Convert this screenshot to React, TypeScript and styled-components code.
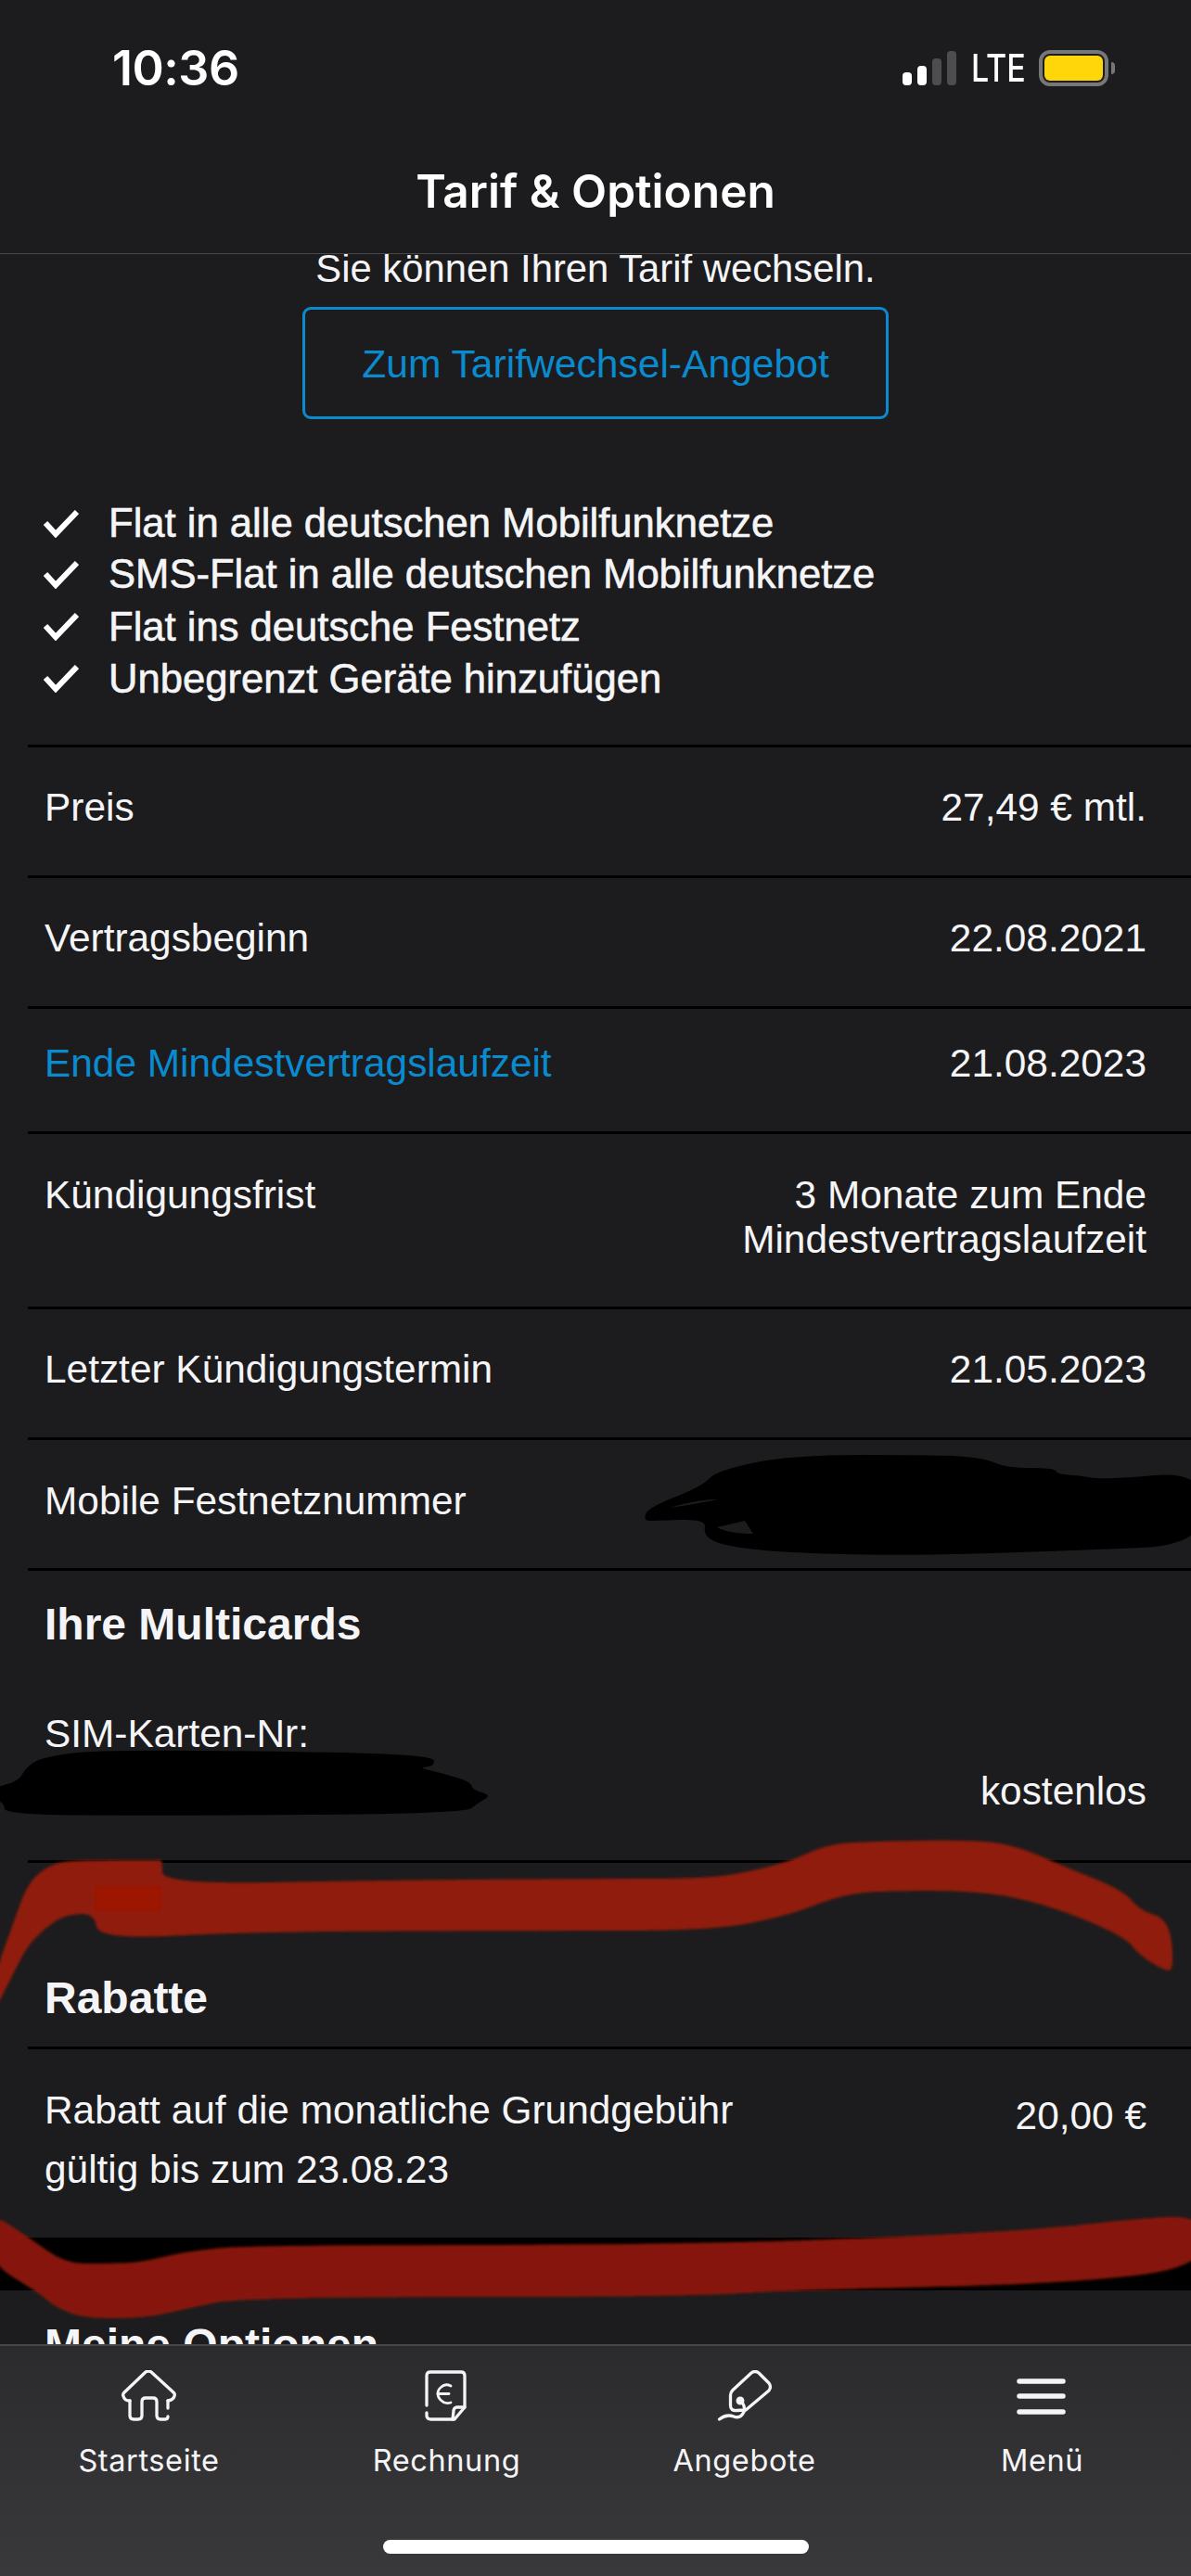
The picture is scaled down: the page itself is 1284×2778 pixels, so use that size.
/**
 * Tarif & Optionen screen
 */

import React from 'react';
import styled, { createGlobalStyle } from 'styled-components';

const GlobalStyle = createGlobalStyle`
  html, body {
    margin: 0;
    padding: 0;
    background: #1c1c1e;
  }
  * {
    box-sizing: border-box;
  }
`;

const Page = styled.div`
  position: relative;
  width: 1284px;
  height: 2778px;
  display: flex;
  flex-direction: column;
  overflow: hidden;
  background: #1c1c1e;
  color: #f5f5f7;
  font-family: 'Liberation Sans', Arial, sans-serif;
  font-size: 42.4px;
`;

const Header = styled.header`
  height: 274px;
  flex-shrink: 0;
  position: relative;
  z-index: 2;
  background: #1c1c1e;
  border-bottom: 1px solid #48484a;
`;

const StatusBar = styled.div`
  display: flex;
  align-items: center;
  justify-content: space-between;
  height: 54px;
  padding: 0 89px 0 121px;
  position: absolute;
  left: 0;
  right: 0;
  top: 46px;
`;

const Time = styled.span`
  font-family: Inter, sans-serif;
  font-weight: 600;
  font-size: 52px;
  letter-spacing: -0.5px;
  color: #fff;
`;

const StatusRight = styled.div`
  display: flex;
  align-items: center;
`;

const Signal = styled.div`
  display: flex;
  align-items: flex-end;
  gap: 6px;
  height: 37px;
  margin-right: 16px;
`;

const SignalBar = styled.div<{ $h: number; $on?: boolean }>`
  width: 10px;
  height: ${({ $h }) => $h}px;
  border-radius: 4px;
  background: ${({ $on }) => ($on ? '#fff' : '#4d4d4f')};
`;

const Network = styled.span`
  display: inline-block;
  width: 57px;
  margin-right: 16px;
  font-family: Inter, sans-serif;
  font-weight: 500;
  font-size: 41px;
  line-height: 1;
  color: #fff;
  white-space: nowrap;
  transform: scaleX(0.83);
  transform-origin: left center;
`;

const Battery = styled.div`
  position: relative;
  width: 75px;
  height: 39px;
  border: 4px solid #77777a;
  border-radius: 12px;
  padding: 2px;

  &::after {
    content: '';
    position: absolute;
    right: -11px;
    top: 9px;
    width: 4px;
    height: 13px;
    border-radius: 0 4px 4px 0;
    background: #77777a;
  }
`;

const BatteryFill = styled.div`
  width: 100%;
  height: 100%;
  border-radius: 6px;
  background: #ffd60a;
`;

const Title = styled.h1`
  margin: 0;
  padding-top: 172px;
  text-align: center;
  font-family: Inter, sans-serif;
  font-weight: 600;
  font-size: 49.6px;
  line-height: 68px;
  color: #fff;
`;

const Content = styled.main`
  flex: 1;
  min-height: 0;
  overflow: hidden;
`;

const Intro = styled.p`
  margin: -8px 0 0;
  text-align: center;
  font-size: 41.8px;
  line-height: 48px;
`;

const OfferButton = styled.button`
  display: block;
  width: 632px;
  height: 121px;
  margin: 17px auto 0;
  padding-top: 2px;
  background: transparent;
  border: 3px solid #0a8bcf;
  border-radius: 9px;
  color: #0a8bcf;
  font-family: inherit;
  font-size: 42.6px;
`;

const Features = styled.ul`
  list-style: none;
  margin: 86px 0 43px;
  padding: 0 0 0 47px;
  font-size: 43.6px;
`;

const Feature = styled.li<{ $height: number }>`
  display: flex;
  align-items: center;
  gap: 32px;
  height: ${({ $height }) => $height}px;
  -webkit-text-stroke: 0.6px #f5f5f7;
`;

const Row = styled.div<{ $height?: number; $pad?: number }>`
  display: flex;
  justify-content: space-between;
  align-items: flex-start;
  height: ${({ $height }) => $height ?? 141}px;
  margin-left: 30px;
  padding: ${({ $pad }) => $pad ?? 41}px 48px 0 18px;
  border-top: 3px solid #000;
  line-height: 48px;
`;

const Label = styled.div<{ $blue?: boolean }>`
  color: ${({ $blue }) => ($blue ? '#0a8bcf' : 'inherit')};
`;

const Value = styled.div`
  text-align: right;
`;

const SectionTitle = styled.h2<{ $height: number; $pad: number; $line?: boolean }>`
  margin: 0 0 0 30px;
  height: ${({ $height }) => $height}px;
  padding: ${({ $pad }) => $pad}px 0 0 18px;
  border-top: ${({ $line }) => ($line ? '3px solid #000' : '0')};
  font-size: 48px;
  line-height: 52px;
  font-weight: 700;
`;

const SimRow = styled.div`
  display: flex;
  justify-content: space-between;
  align-items: flex-end;
  height: 188px;
  margin-left: 30px;
  padding: 28px 48px 50px 18px;
  line-height: 48px;

  ${Label} {
    align-self: flex-start;
  }
`;

const DiscountRow = styled(Row)`
  line-height: 64px;
  height: 206px;
  padding-top: 34px;
`;

const DiscountValue = styled(Value)`
  margin-top: 6px;
`;

const Band = styled.div`
  height: 57px;
  background: #000;
`;

const BottomNav = styled.nav`
  position: relative;
  z-index: 2;
  flex-shrink: 0;
  height: 250px;
  display: grid;
  grid-template-columns: repeat(4, 1fr);
  align-items: start;
  padding-top: 26px;
  background: linear-gradient(180deg, #2b2b2d 0%, #39393b 100%);
  border-top: 2px solid #48484a;
`;

const NavItem = styled.div`
  display: flex;
  flex-direction: column;
  align-items: center;
  gap: 18px;
  font-family: Inter, sans-serif;
  font-size: 32.5px;
  line-height: 40px;
  letter-spacing: 0.6px;
  color: #f5f5f7;
`;

const NavIcon = styled.svg`
  display: block;
  width: 60px;
  height: 60px;
  fill: none;
  stroke: #f5f5f7;
  stroke-width: 3.3;
  stroke-linecap: round;
  stroke-linejoin: round;
`;

const HomeIndicator = styled.div`
  position: absolute;
  left: 413px;
  bottom: 24px;
  width: 459px;
  height: 15px;
  border-radius: 8px;
  background: #fff;
`;

const CheckIcon = styled.svg`
  flex-shrink: 0;
  width: 38px;
  height: 30px;
  fill: none;
  stroke: #fff;
  stroke-width: 6;
`;

const Scribbles = styled.svg`
  position: absolute;
  left: 0;
  top: 0;
  z-index: 1;
  width: 1284px;
  height: 2778px;
  pointer-events: none;
`;

const features: [string, number][] = [
  ['Flat in alle deutschen Mobilfunknetze', 53],
  ['SMS-Flat in alle deutschen Mobilfunknetze', 57],
  ['Flat ins deutsche Festnetz', 56],
  ['Unbegrenzt Geräte hinzufügen', 56],
];

// closed outline through the midpoints of the given points, so marker strokes stay round
const smooth = (pts: number[][]) => {
  const mid = (a: number[], b: number[]) => `${(a[0] + b[0]) / 2} ${(a[1] + b[1]) / 2}`;
  let d = `M${mid(pts[pts.length - 1], pts[0])}`;
  pts.forEach((p, i) => {
    d += `Q${p[0]} ${p[1]} ${mid(p, pts[(i + 1) % pts.length])}`;
  });
  return d + 'Z';
};

const phoneInk = smooth([
  [694, 1640], [698, 1626], [757, 1603], [772, 1586], [853, 1569], [1007, 1569], [1060, 1572], [1085, 1583],
  [1137, 1583], [1140, 1590], [1163, 1591], [1190, 1596], [1300, 1586], [1300, 1666], [1163, 1672], [973, 1678],
  [840, 1674], [780, 1667], [758, 1656], [762, 1638], [705, 1640],
]);

const simInk = smooth([
  [28, 1906], [45, 1895], [106, 1887], [328, 1889], [468, 1893], [468, 1905], [450, 1906], [480, 1913],
  [508, 1922], [509, 1930], [530, 1936], [516, 1944], [500, 1956], [164, 1958], [6, 1957], [4, 1944],
  [-8, 1940], [-8, 1928], [20, 1921],
]);

const redTop = smooth([
  [-14, 2185], [-6, 2130], [14, 2075], [30, 2030], [55, 2010], [82, 2006], [172, 2006], [175, 2006], [175, 2032],
  [400, 2028], [614, 2026], [762, 2026], [810, 2018], [852, 2007], [890, 1990], [925, 1986], [1056, 1984],
  [1100, 1992], [1150, 2014], [1212, 2039], [1228, 2060], [1261, 2070], [1266, 2126], [1253, 2124], [1228, 2108],
  [1212, 2088], [1130, 2054], [1056, 2039], [942, 2039], [900, 2046], [852, 2065], [770, 2082], [600, 2082],
  [270, 2083], [106, 2092], [102, 2063], [70, 2065], [49, 2079], [30, 2098], [16, 2125],
]);

const redBottom = smooth([
  [-12, 2385], [30, 2412], [70, 2441], [110, 2441], [151, 2440], [200, 2428], [270, 2421], [737, 2421],
  [1048, 2409], [1163, 2400], [1212, 2394], [1300, 2388], [1300, 2445], [1147, 2463], [844, 2470], [737, 2477],
  [262, 2477], [200, 2490], [156, 2500], [90, 2500], [60, 2488], [41, 2472], [-12, 2440],
]);

const Check = () => (
  <CheckIcon viewBox="0 0 38 30">
    <polyline points="2,14 13,26 36,2" />
  </CheckIcon>
);

const HomeGlyph = () => (
  <NavIcon viewBox="0 0 60 60">
    <path d="M9 33Q3 33 2 28Q1 26 3 24L26 2Q29 0 32 2L56 24Q58 26 57 28Q56 32 50 33" />
    <path d="M9 33V49Q9 53 13 53H18Q22 53 22 49V34Q22 30 26 30H34Q38 30 38 34V49Q38 53 42 53H47Q50 53 50 50" />
    <path d="M50 33V41" />
  </NavIcon>
);

const BillGlyph = () => (
  <NavIcon viewBox="0 0 60 60">
    <path d="M8 38V6Q8 2 12 2H45Q49 2 49 6V40L38 53H13Q8 53 8 49V46" />
    <path d="M49 40H40Q37 41 37 44L36 53" />
    <path d="M34 17Q28 14 24 18Q20 21 20 25Q20 30 24 33Q28 37 34 35" strokeWidth="2.8" />
    <path d="M20 25.5H32" strokeWidth="2.8" />
  </NavIcon>
);

const TagGlyph = () => (
  <NavIcon viewBox="0 0 60 60">
    <path d="M31 43L21 43.5Q14.5 44 14.5 38V27Q14.5 24 17 21.5L37 3Q41 0 45 3L56 14Q59 18 56 22L31 43" />
    <path d="M25 33Q31 38 29 45Q25 53 18 50Q10 47 2.5 53" />
    <circle cx="25" cy="33" r="2.8" fill="#f5f5f7" />
  </NavIcon>
);

const MenuGlyph = () => (
  <NavIcon viewBox="0 0 60 60">
    <path d="M5 12H52M5 28H52M5 45H52" strokeWidth="5.5" />
  </NavIcon>
);

export default function App() {
  return (
    <Page>
      <GlobalStyle />
      <Header>
        <StatusBar>
          <Time>10:36</Time>
          <StatusRight>
            <Signal>
              <SignalBar $h={14} $on />
              <SignalBar $h={21} $on />
              <SignalBar $h={29} />
              <SignalBar $h={37} />
            </Signal>
            <Network>LTE</Network>
            <Battery>
              <BatteryFill />
            </Battery>
          </StatusRight>
        </StatusBar>
        <Title>Tarif &amp; Optionen</Title>
      </Header>

      <Content>
        <Intro>Sie können Ihren Tarif wechseln.</Intro>
        <OfferButton>Zum Tarifwechsel-Angebot</OfferButton>

        <Features>
          {features.map(([text, height]) => (
            <Feature key={text} $height={height}>
              <Check />
              {text}
            </Feature>
          ))}
        </Features>

        <Row>
          <Label>Preis</Label>
          <Value>27,49 € mtl.</Value>
        </Row>
        <Row>
          <Label>Vertragsbeginn</Label>
          <Value>22.08.2021</Value>
        </Row>
        <Row $height={135} $pad={35}>
          <Label $blue>Ende Mindestvertragslaufzeit</Label>
          <Value>21.08.2023</Value>
        </Row>
        <Row $height={189} $pad={42}>
          <Label>Kündigungsfrist</Label>
          <Value>
            3 Monate zum Ende
            <br />
            Mindestvertragslaufzeit
          </Value>
        </Row>
        <Row>
          <Label>Letzter Kündigungstermin</Label>
          <Value>21.05.2023</Value>
        </Row>
        <Row $pad={42}>
          <Label>Mobile Festnetznummer</Label>
        </Row>

        <SectionTitle $line $height={127} $pad={32}>
          Ihre Multicards
        </SectionTitle>
        <SimRow>
          <Label>SIM-Karten-Nr:</Label>
          <Value>kostenlos</Value>
        </SimRow>

        <SectionTitle $line $height={201} $pad={120}>
          Rabatte
        </SectionTitle>
        <DiscountRow>
          <Label>
            Rabatt auf die monatliche Grundgebühr
            <br />
            gültig bis zum 23.08.23
          </Label>
          <DiscountValue>20,00 €</DiscountValue>
        </DiscountRow>
        <Band />
        <SectionTitle $height={80} $pad={33}>
          Meine Optionen
        </SectionTitle>
      </Content>

      <Scribbles viewBox="0 0 1284 2778">
        <defs>
          <filter id="soft">
            <feGaussianBlur stdDeviation="1.6" />
          </filter>
        </defs>
        <path fill="#000" d={phoneInk} />
        <path fill="#1c1c1e" d="M722 1626Q750 1622 774 1617Q750 1617 722 1626Z" />
        <path fill="#1c1c1e" d="M773 1647L803 1640L812 1654Q785 1654 773 1647Z" />
        <path fill="#000" d={simInk} />
        <g filter="url(#soft)">
          <path fill="#8f1c08" d={redTop} />
          <rect x="102" y="2034" width="72" height="27" fill="#9c1306" />
          <path fill="#861607" d={redBottom} />
        </g>
      </Scribbles>

      <BottomNav>
        <NavItem>
          <HomeGlyph />
          Startseite
        </NavItem>
        <NavItem>
          <BillGlyph />
          Rechnung
        </NavItem>
        <NavItem>
          <TagGlyph />
          Angebote
        </NavItem>
        <NavItem>
          <MenuGlyph />
          Menü
        </NavItem>
        <HomeIndicator />
      </BottomNav>
    </Page>
  );
}
